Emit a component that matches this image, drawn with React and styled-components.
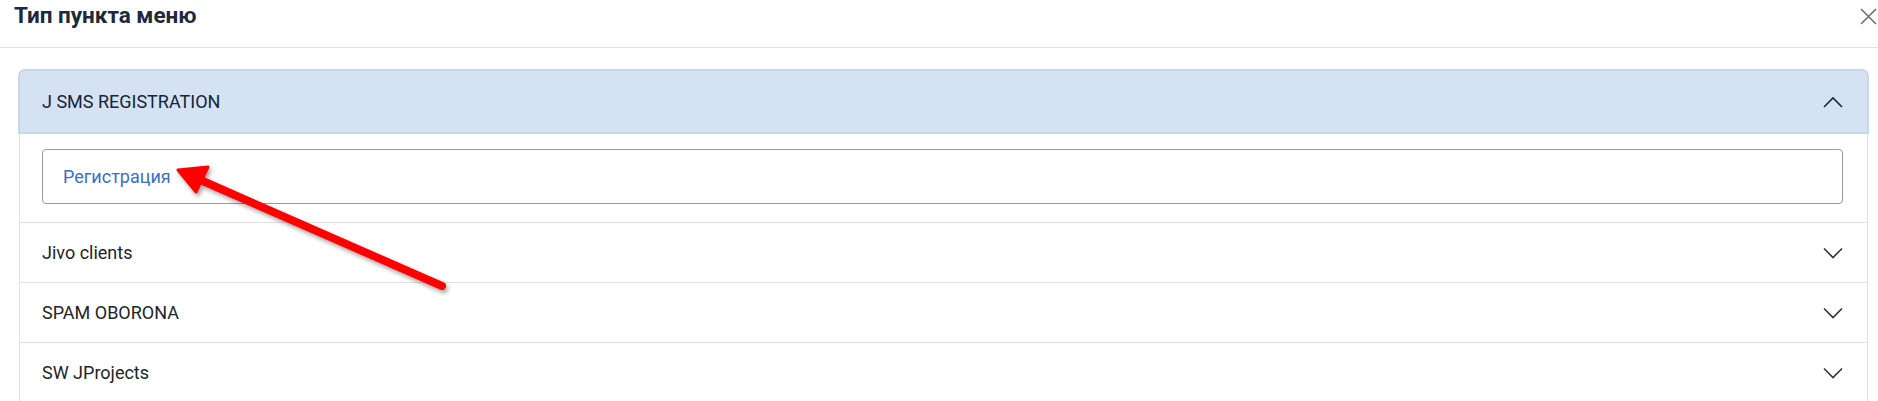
import React, { useState } from 'react';
import styled, { createGlobalStyle } from 'styled-components';

const GlobalStyle = createGlobalStyle`
  html, body {
    margin: 0;
    padding: 0;
    overflow: hidden;
    background: #fff;
    font-family: Roboto, "Liberation Sans", Arial, sans-serif;
  }
`;

const Modal = styled.div`
  position: relative;
  width: 1878px;
  background: #fff;
`;

const ModalHeader = styled.div`
  display: flex;
  justify-content: space-between;
  align-items: flex-start;
  height: 48px;
  padding-left: 14px;
  box-sizing: border-box;
  border-bottom: 1px solid #dde2e9;
`;

const Title = styled.h5`
  margin: 0;
  font-size: 22.5px;
  line-height: 31px;
  font-weight: 700;
  color: #1d2a3b;
`;

const CloseButton = styled.button`
  border: 0;
  background: none;
  padding: 0;
  margin: 8px 1px 0 0;
  width: 17px;
  height: 17px;
  display: flex;
  cursor: pointer;
`;

const ModalBody = styled.div`
  padding: 22px 10px 0 19px;
`;

const Accordion = styled.div`
  border: 1px solid #dee2e6;
  border-bottom: 0;
  border-radius: 6px 6px 0 0;
`;

const Item = styled.div`
  & + & {
    border-top: 1px solid #dee2e6;
  }
`;

const ItemButton = styled.button`
  width: 100%;
  height: ${p => (p.$open ? '61px' : '59px')};
  display: flex;
  align-items: center;
  justify-content: space-between;
  padding: 0 24px 0 22px;
  box-sizing: border-box;
  border: 0;
  font-family: inherit;
  font-size: 18px;
  text-align: left;
  cursor: pointer;
  background: ${p => (p.$open ? '#d4e2f1' : '#fff')};
  color: ${p => (p.$open ? '#15233d' : '#212529')};
  border-radius: ${p => (p.$open ? '5px 5px 0 0' : '0')};
  box-shadow: ${p => (p.$open ? '0 0 0 2px #c6d6eb' : 'none')};
  position: relative;
`;

const Collapse = styled.div`
  padding: 16px 24px 18px 22px;
  border-top: 1px solid #c6d6eb;
`;

const TypeLink = styled.a`
  display: flex;
  align-items: center;
  height: 55px;
  padding-left: 20px;
  box-sizing: border-box;
  border: 1px solid #919caa;
  border-radius: 4px;
  color: #3b6fc0;
  font-size: 18px;
  text-decoration: none;
`;

const Annotation = styled.svg`
  position: absolute;
  left: 0;
  top: 0;
  pointer-events: none;
`;

const Chevron = ({ up, color }) => (
  <svg width="20" height="12" viewBox="0 0 20 12" fill="none">
    <polyline
      points={up ? '1,11 10,2 19,11' : '1,1.5 10,10.5 19,1.5'}
      stroke={color}
      strokeWidth="1.6"
    />
  </svg>
);

const groups = [
  { id: 1, name: 'J SMS REGISTRATION', links: ['Регистрация'] },
  { id: 2, name: 'Jivo clients', links: [] },
  { id: 3, name: 'SPAM OBORONA', links: [] },
  { id: 4, name: 'SW JProjects', links: [] },
];

function App() {
  const [openId, setOpenId] = useState(1);

  return (
    <Modal>
      <GlobalStyle />
      <ModalHeader>
        <Title>Тип пункта меню</Title>
        <CloseButton aria-label="Закрыть">
          <svg width="17" height="17" viewBox="0 0 17 17">
            <path d="M1 1 L16 16 M16 1 L1 16" stroke="#707070" strokeWidth="1.6" />
          </svg>
        </CloseButton>
      </ModalHeader>
      <ModalBody>
        <Accordion>
          {groups.map(g => {
            const open = g.id === openId;
            return (
              <Item key={g.id}>
                <ItemButton $open={open} onClick={() => setOpenId(open ? null : g.id)}>
                  {g.name}
                  <Chevron up={open} color={open ? '#1a2944' : '#333'} />
                </ItemButton>
                {open && (
                  <Collapse>
                    {g.links.map(l => (
                      <TypeLink key={l} href="#">{l}</TypeLink>
                    ))}
                  </Collapse>
                )}
              </Item>
            );
          })}
        </Accordion>
      </ModalBody>
      <Annotation width="1878" height="401">
        <defs>
          <filter id="shadow" x="-20%" y="-20%" width="140%" height="140%">
            <feDropShadow dx="2" dy="3" stdDeviation="2" floodColor="#000" floodOpacity="0.35" />
          </filter>
        </defs>
        <g filter="url(#shadow)">
          <line x1="442" y1="286" x2="196" y2="178" stroke="#ff0000" strokeWidth="8" strokeLinecap="round" />
          <polygon points="178,170 208,167 196,192" fill="#ff0000" stroke="#ff0000" strokeWidth="3" strokeLinejoin="round" />
        </g>
      </Annotation>
    </Modal>
  );
}

export default App;
